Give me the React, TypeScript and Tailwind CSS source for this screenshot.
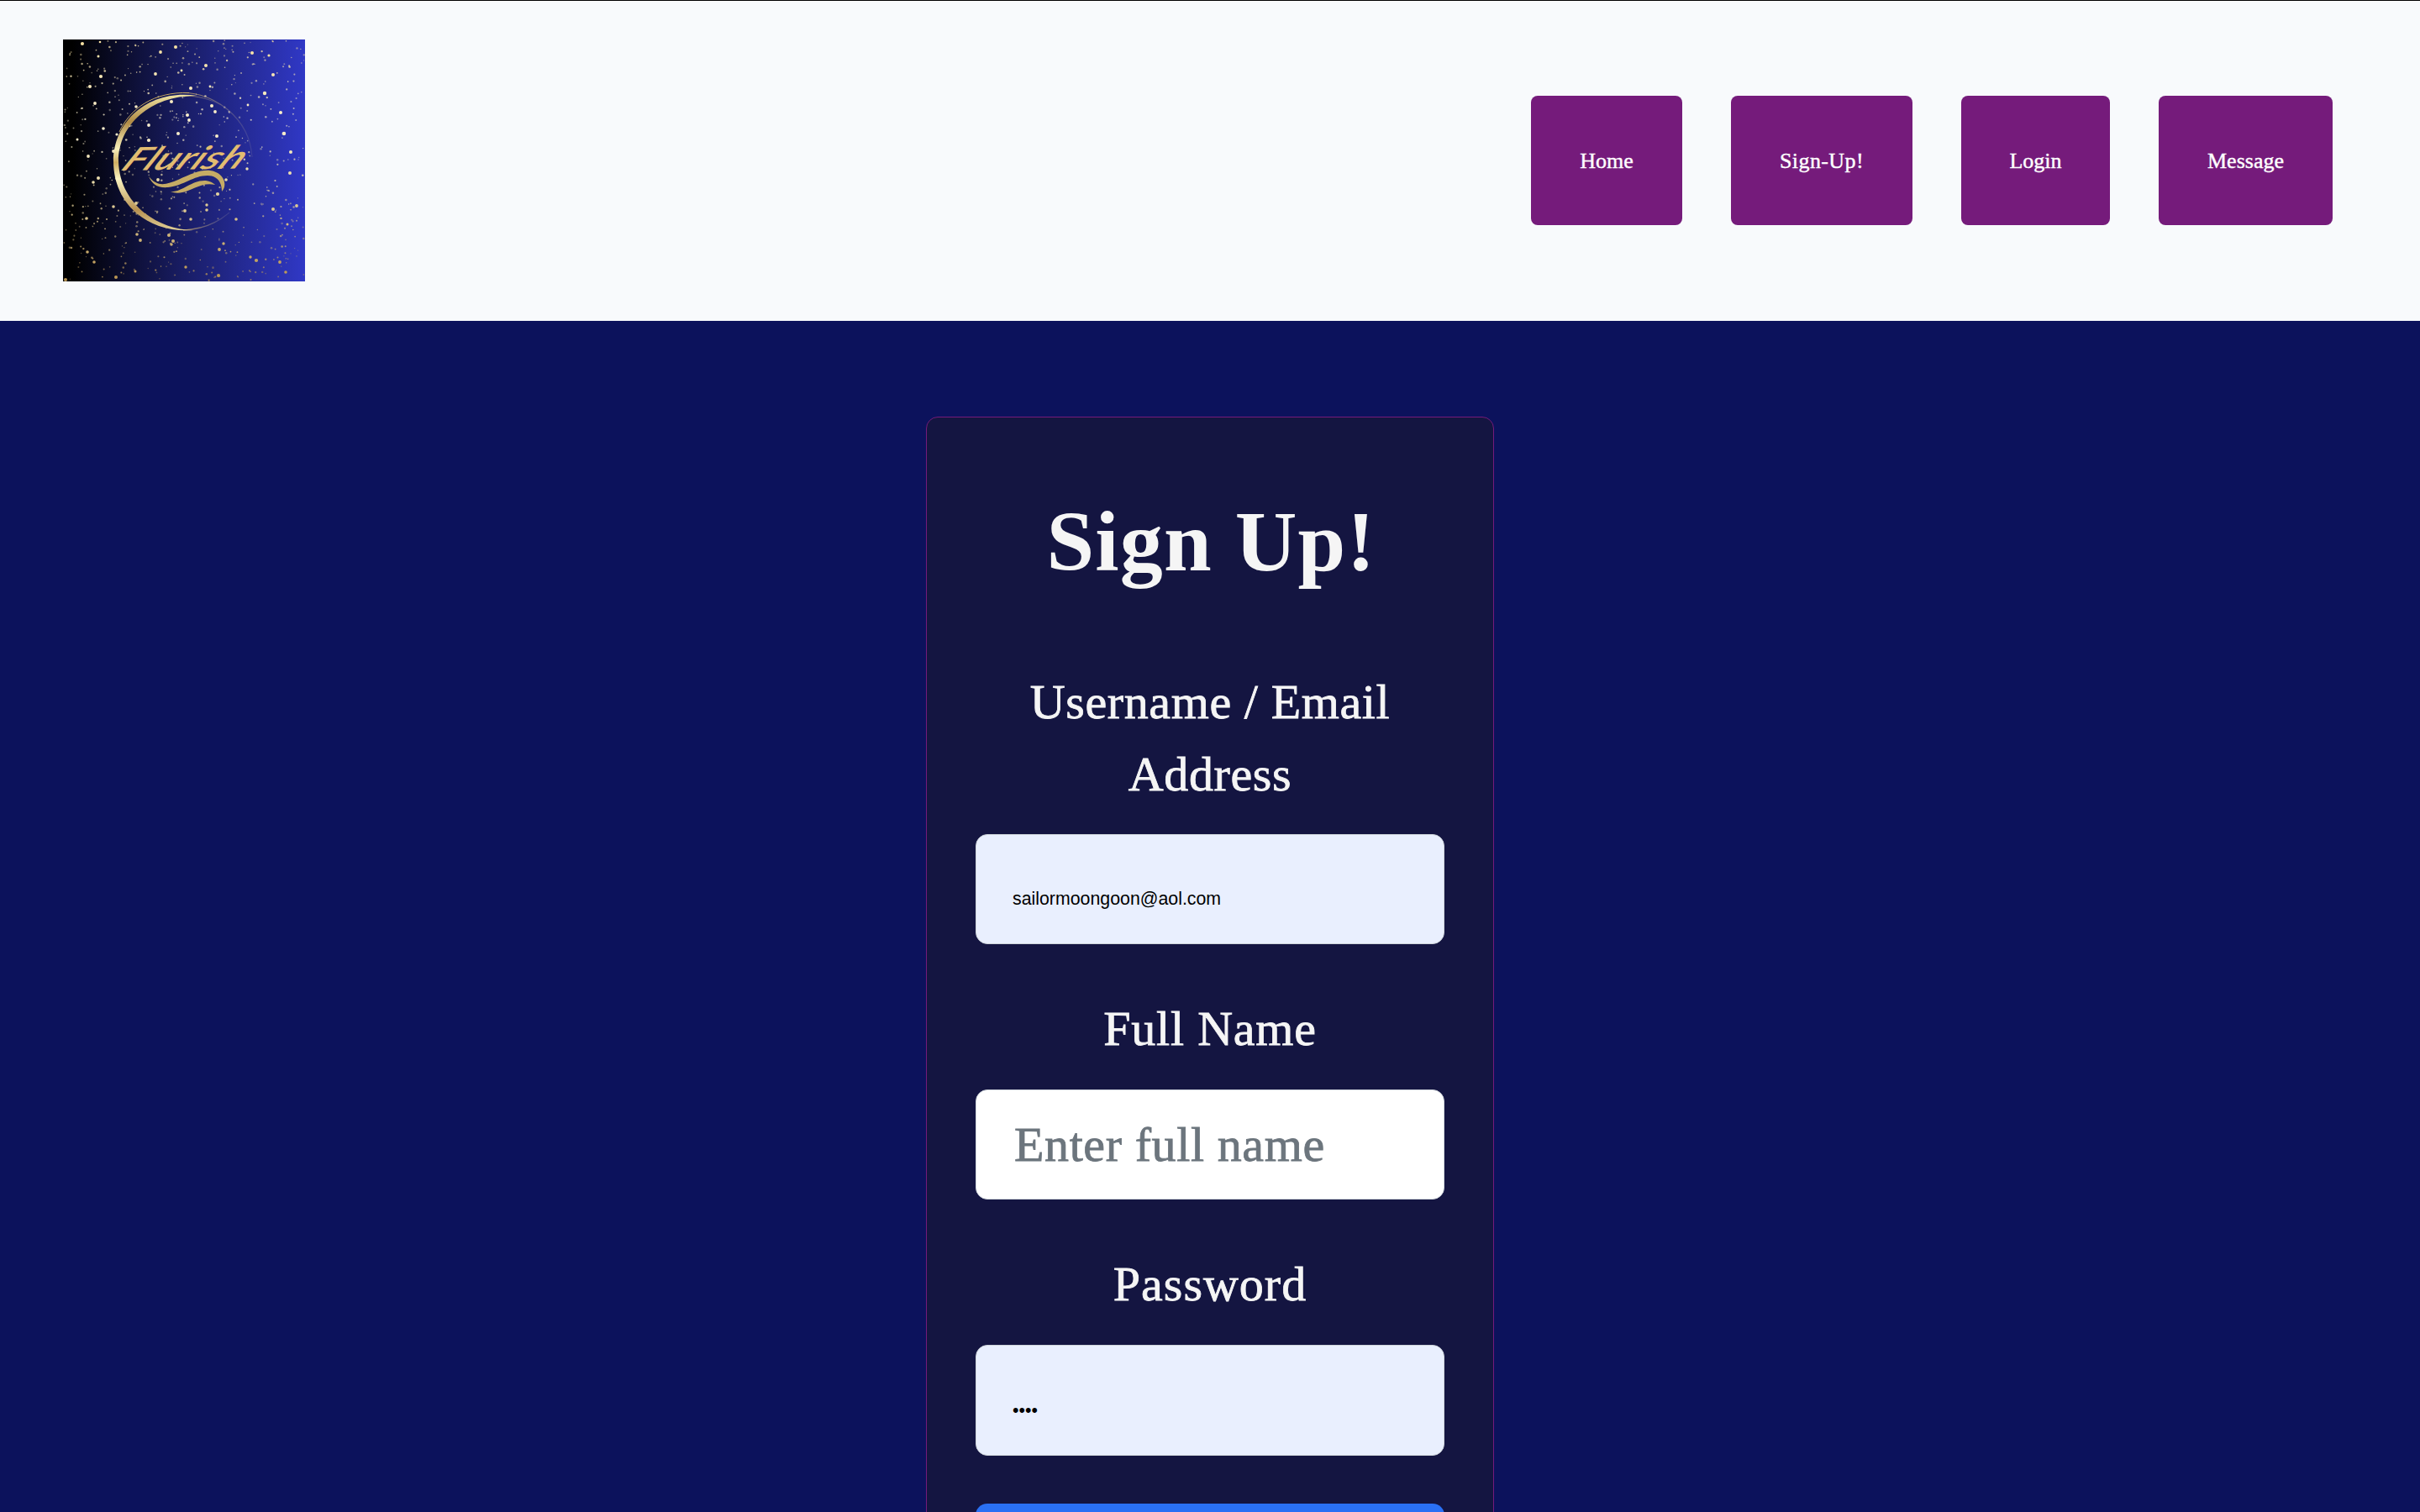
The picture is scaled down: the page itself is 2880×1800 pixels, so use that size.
const STARS: [number, number, number][] = [
  [23, 5, 2], [44, 3, 1.3], [116, 15, 1.9], [134, 9, 2], [42, 20, 1.5], [170, 31, 2], [225, 16, 2], [245, 19, 1.6], [250, 42, 2], [45, 44, 2.1], [32, 56, 2],
  [110, 41, 1.9], [141, 37, 1.4], [152, 58, 2], [175, 56, 1.4], [240, 64, 2.2], [38, 76, 1.9], [87, 80, 1.8], [129, 74, 2], [177, 79, 2], [181, 86, 1.9], [220, 78, 1.4],
  [259, 87, 2], [148, 90, 2], [150, 96, 1.9], [102, 102, 1.9], [137, 112, 2], [183, 115, 2], [263, 112, 2.2], [48, 106, 1.8], [64, 113, 1.6], [102, 120, 2.1],
  [17, 119, 1.5], [30, 139, 1.9], [60, 133, 1.9], [271, 134, 2], [42, 165, 2], [36, 170, 1.8], [113, 167, 1.9], [219, 154, 1.7], [270, 159, 2], [194, 167, 1.8],
  [184, 184, 2.1], [87, 195, 1.9], [60, 199, 1.8], [28, 213, 1.8], [145, 204, 1.9], [171, 203, 1.8], [171, 197, 1.7], [152, 214, 1.8], [206, 214, 1.8], [250, 202, 2],
  [88, 232, 1.8], [92, 239, 1.9], [126, 233, 2], [131, 240, 2], [129, 244, 1.7], [29, 253, 1.8], [37, 265, 1.8], [186, 250, 1.9], [191, 243, 1.7], [223, 259, 1.7],
  [230, 263, 2.1], [258, 265, 1.9], [265, 277, 1.8], [185, 281, 2], [63, 283, 2], [3, 286, 2], [86, 276, 1.5], [146, 271, 1.7], [278, 198, 1.9], [267, 220, 1.5],
];

// Deterministic dust scattered between the larger stars.
function dust() {
  let seed = 73;
  const rnd = () => {
    seed = (seed * 16807) % 2147483647;
    return seed / 2147483647;
  };
  return Array.from({ length: 640 }, (_, i) => ({
    id: i,
    x: rnd() * 286 + 1,
    y: rnd() * 286 + 1,
    r: 0.6 + rnd() * 0.7,
    o: 0.35 + rnd() * 0.45,
  }));
}
const DUST = dust();

function Logo() {
  return (
    <svg viewBox="0 0 288 288" className="size-[288px]" role="img" aria-label="Flurish">
      <defs>
        <linearGradient id="night">
          <stop offset="0" stopColor="#000000" />
          <stop offset="0.04" stopColor="#000000" />
          <stop offset="0.5" stopColor="#191d65" />
          <stop offset="1" stopColor="#3038c6" />
        </linearGradient>
        <linearGradient id="ring" x1="0" y1="0" x2="0" y2="1">
          <stop offset="0" stopColor="#efe3a2" />
          <stop offset="0.2" stopColor="#b08a45" />
          <stop offset="0.4" stopColor="#f7efba" />
          <stop offset="0.5" stopColor="#cfae62" />
          <stop offset="0.62" stopColor="#faf3c0" />
          <stop offset="0.85" stopColor="#b89252" />
          <stop offset="1" stopColor="#e0cf97" />
        </linearGradient>
        <linearGradient id="starlight" gradientUnits="userSpaceOnUse" x1="0" y1="0" x2="0" y2="288">
          <stop offset="0" stopColor="#f5dfa0" />
          <stop offset="0.35" stopColor="#faf0d0" />
          <stop offset="0.6" stopColor="#e8d9a8" />
          <stop offset="1" stopColor="#b8934f" />
        </linearGradient>
        <linearGradient id="fade">
          <stop offset="0" stopColor="#b99b66" stopOpacity="0.9" />
          <stop offset="1" stopColor="#8c86a0" stopOpacity="0.2" />
        </linearGradient>
      </defs>
      <rect width="288" height="288" fill="url(#night)" />
      <g fill="url(#starlight)">
        {DUST.map((d) => (
          <circle key={d.id} cx={d.x} cy={d.y} r={d.r} opacity={d.o} />
        ))}
      </g>
      <path d="M143 63.5 C178 63 222 92 225 140" fill="none" stroke="url(#fade)" strokeWidth="1.2" />
      <path d="M145 67 C160 67 175 71 188 78" fill="none" stroke="url(#fade)" strokeWidth="1" />
      <path d="M143 227 C165 226 182 220 198 206" fill="none" stroke="url(#fade)" strokeWidth="1.2" />
      <path d="M160 67 C105 58 60 95 60 145 C60 195 100 231 155 227 C108 226 67 192 66 145 C66 101 105 66 160 67 Z" fill="url(#ring)" />
      <path d="M67 110 C80 82 108 62 150 63.5" fill="none" stroke="#c4a661" strokeWidth="1" />
      <g fill="url(#starlight)">
        {STARS.map(([x, y, r]) => (
          <circle key={`${x}-${y}`} cx={x} cy={y} r={r} />
        ))}
      </g>
      <path d="M102 163 C113 177 124 172 137 167 C153 160 163 155 175 156 C190 158 197 172 189 181 C189 170 184 162 172 162 C155 162 144 174 125 176 C112 177 106 172 102 163 Z" fill="#c5ab65" />
      <path d="M128 181 C142 182 153 167 170 168 Q177 169 181 173 C166 169 153 180 142 182 Q135 184 128 181 Z" fill="#c5ab65" />
      <text
        transform="translate(67 156) rotate(-1) skewX(-34)"
        textLength="142"
        lengthAdjust="spacingAndGlyphs"
        className="fill-[#e2bc70] font-['Lato'] text-[38px] font-semibold italic"
      >
        Flurish
      </text>
    </svg>
  );
}

const LINKS = [
  { label: "Home", box: "w-[180px]" },
  { label: "Sign-Up!", box: "w-[216px] tracking-[0.4px]" },
  { label: "Login", box: "w-[177px]" },
  { label: "Message", box: "w-[207px]" },
];

function Header() {
  return (
    <header className="flex h-[382px] shrink-0 items-center justify-between border-t border-black bg-[#f8fafc] pr-[104px] pb-px pl-[75px]">
      <Logo />
      <nav className="flex gap-[58px]">
        {LINKS.map((l) => (
          <a
            key={l.label}
            href="#"
            className={`flex h-[154px] items-center justify-center rounded-lg bg-[#751b7b] text-[26px] text-white [-webkit-text-stroke:0.4px] ${l.box}`}
          >
            {l.label}
          </a>
        ))}
      </nav>
    </header>
  );
}

const LABEL = "block text-center text-[58px] leading-[86px] [-webkit-text-stroke:0.8px]";
const FIELD = "block w-full rounded-[14px] border border-[#ced4da]";
const AUTOFILL = "bg-[#e9effe] pt-[24px] pl-[43px] font-['Liberation_Sans',sans-serif] text-[21.33px] text-black";

export default function App() {
  return (
    <div className="flex h-[1800px] w-[2880px] flex-col overflow-hidden bg-[#0c125c] font-['Liberation_Serif',serif]">
      <Header />
      <main className="flex justify-center pt-[114px]">
        <form className="h-[1500px] w-[676px] rounded-[14px] border border-[#751b7b] bg-[#141541] px-[58px] text-[#f5f5f5]">
          <h1 className="mt-[86px] pl-[3px] text-center text-[102px] leading-[124px] font-bold tracking-[1.2px]">Sign Up!</h1>
          <label className={`${LABEL} mt-[86px] tracking-[0.6px]`}>Username / Email Address</label>
          <input type="text" defaultValue="sailormoongoon@aol.com" className={`${FIELD} ${AUTOFILL} mt-[28px] h-[131px]`} />
          <label className={`${LABEL} mt-[58px] tracking-[0.8px]`}>Full Name</label>
          <input
            type="text"
            placeholder="Enter full name"
            className={`${FIELD} mt-[29px] h-[131px] bg-white pl-[45px] text-[58px] tracking-[0.6px] [-webkit-text-stroke:0.8px] placeholder:text-[#6c757d]`}
          />
          <label className={`${LABEL} mt-[58px] tracking-[1px]`}>Password</label>
          <input type="text" defaultValue="••••" className={`${FIELD} ${AUTOFILL} mt-[29px] h-[132px]`} />
          <button type="button" aria-label="Sign up" className="mt-[57px] block h-[131px] w-full rounded-[14px] bg-[#2a70f4]" />
        </form>
      </main>
    </div>
  );
}
